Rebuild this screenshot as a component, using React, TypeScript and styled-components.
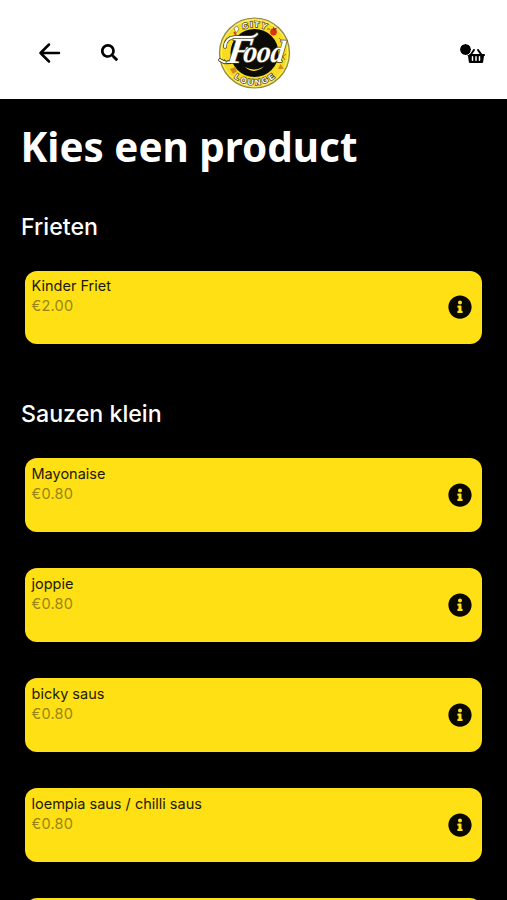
import React from "react";
import styled, { createGlobalStyle } from "styled-components";
import { FaInfoCircle, FaSearch, FaShoppingBasket } from "react-icons/fa";

const GlobalStyle = createGlobalStyle`
  * { box-sizing: border-box; }
  html, body { margin: 0; background: #000; }
  body { height: 900px; overflow: hidden; font-family: Inter, "Liberation Sans", sans-serif; }
`;

const Screen = styled.div`
  height: 900px;
  overflow: hidden;
  background: #000;
`;

const Header = styled.header`
  display: grid;
  grid-template-columns: 1fr 76px 1fr;
  align-items: center;
  height: 98.5px;
  padding: 7px 22px 0;
  background: #fff;
  color: #000;
`;

const HeaderActions = styled.div`
  display: flex;
  align-items: center;
  gap: 40px;
  padding-left: 16px;
`;

const IconButton = styled.button`
  display: flex;
  padding: 0;
  border: 0;
  background: none;
  color: inherit;
`;

const BasketButton = styled(IconButton)`
  position: relative;
  justify-self: end;
  margin-top: 6px;
`;

const BasketBadge = styled.span`
  position: absolute;
  left: -8px;
  top: -4px;
  width: 13px;
  height: 13px;
  border: 1.5px solid #fff;
  border-radius: 50%;
  background: #000;
  background-clip: padding-box;
`;

const Logo = styled.svg`
  display: block;
  width: 76px;
  height: 76px;
  overflow: visible;
`;

const Title = styled.h1`
  margin: 0;
  padding: 20px 0 0 20.5px;
  color: #fff;
  font: 700 40.4px/56px "Noto Sans", "Open Sans", sans-serif;
  white-space: nowrap;
`;

const Section = styled.section`
  padding: 36px 24.7px 18.3px 25px;
`;

const SectionTitle = styled.h2`
  margin: 0 0 28px -4px;
  color: #fff;
  font-size: 23.2px;
  font-weight: 500;
  line-height: 32px;
`;

const ProductList = styled.div`
  display: flex;
  flex-direction: column;
  gap: 36.5px;
`;

const ProductCard = styled.article`
  display: flex;
  justify-content: space-between;
  align-items: center;
  height: 73.5px;
  padding: 0 10px 0 6.5px;
  border-radius: 12px;
  background: #ffe015;
`;

const ProductText = styled.div`
  align-self: flex-start;
  padding-top: 5.4px;
  font-size: 14.5px;
  line-height: 20px;
  white-space: nowrap;
`;

const ProductName = styled.div`
  color: #1c1a05;
`;

const Price = styled.div`
  color: #978613;
  letter-spacing: 0.25px;
`;

const sections = [
  { title: "Frieten", products: [{ name: "Kinder Friet", price: "€2.00" }] },
  {
    title: "Sauzen klein",
    products: [
      { name: "Mayonaise", price: "€0.80" },
      { name: "joppie", price: "€0.80" },
      { name: "bicky saus", price: "€0.80" },
      { name: "loempia saus / chilli saus", price: "€0.80" },
      { name: "", price: "" },
    ],
  },
];

function BrandLogo() {
  return (
    <Logo viewBox="0 0 76 76" role="img" aria-label="City Food Lounge">
      <defs>
        <path id="topArc" d="M12.5 38 A26 26 0 0 1 64.5 38" />
        <path id="bottomArc" d="M6.5 38 A32 32 0 0 0 70.5 38" />
      </defs>
      <circle cx="38.5" cy="38" r="35" fill="#f6dc22" stroke="#8f8748" strokeWidth="1.2" />
      <circle cx="38.5" cy="38" r="33.3" fill="none" stroke="#fff6a8" strokeWidth="0.8" />
      <circle cx="38.5" cy="38" r="24" fill="#0b0b07" />
      <g fontFamily="Liberation Sans" fontWeight="700" fontSize="8" fill="#fff" stroke="#57502a" strokeWidth="1.5" paintOrder="stroke" textAnchor="middle">
        <text letterSpacing="1.6"><textPath href="#topArc" startOffset="51%">CITY</textPath></text>
        <text letterSpacing="2"><textPath href="#bottomArc" startOffset="51%">LOUNGE</textPath></text>
      </g>
      <path d="M18 13 l3 -2 2 3 -3 4z" fill="#fff" stroke="#777033" strokeWidth=".7" />
      <path d="M18 17 l2 3" stroke="#c43a16" strokeWidth="1.5" />
      <circle cx="57.5" cy="17" r="3.4" fill="#dd3217" />
      <path d="M56.5 14.5 l1-3 1 2 3-1-3 3" fill="#8e3418" />
      <path d="M14 54 l5-2 2 4-4 3z M62 54 l2.5-5 3.5 5z" fill="#d08a1a" />
      <path d="M26 14h3M51 14h3M8 44 l5 5 M65 39 l4 6 M64 44 l6-5 M63 23 l5 5 M9 27 l5-6" fill="none" stroke="#81751e" />
      <path d="M29 52 Q38 57 48 51.5 Q38 60 29 52Z" fill="#efdb22" />
      <g fill="none" strokeLinecap="round">
        <path d="M9 32 Q9 23 19 22 H35 Q39 22 41 19 M17 45 Q11 50 4 45" stroke="#49441f" strokeWidth="3.6" />
        <path d="M9 32 Q9 23 19 22 H35 Q39 22 41 19 M17 45 Q11 50 4 45" stroke="#fff" strokeWidth="2.1" />
      </g>
      <g fontFamily="Liberation Serif" fontStyle="italic" fontWeight="700" fill="#fff" stroke="#3b371b" strokeWidth="1.5" strokeLinejoin="round" paintOrder="stroke">
        <text x="17" y="48" fontSize="37" transform="skewX(-8)">
          F<tspan x="33" y="47" fontSize="31" textLength="41" lengthAdjust="spacingAndGlyphs">ood</tspan>
        </text>
      </g>
    </Logo>
  );
}

function Product({ name, price }: { name: string; price: string }) {
  return (
    <ProductCard>
      <ProductText>
        <ProductName>{name}</ProductName>
        <Price>{price}</Price>
      </ProductText>
      <FaInfoCircle size={24} color="#080700" />
    </ProductCard>
  );
}

export default function App() {
  return (
    <Screen>
      <GlobalStyle />
      <Header>
        <HeaderActions>
          <IconButton aria-label="Terug">
            <svg width="23" height="22" viewBox="0 0 23 22" fill="none" stroke="currentColor" strokeWidth="2.5" strokeLinecap="round" strokeLinejoin="round">
              <path d="M21 11H2.5M11 2.5 2.5 11 11 19.5" />
            </svg>
          </IconButton>
          <IconButton aria-label="Zoeken"><FaSearch size={17} /></IconButton>
        </HeaderActions>
        <BrandLogo />
        <BasketButton aria-label="Winkelmand">
          <FaShoppingBasket size={18} />
          <BasketBadge />
        </BasketButton>
      </Header>
      <Title>Kies een product</Title>
      {sections.map((section) => (
        <Section key={section.title}>
          <SectionTitle>{section.title}</SectionTitle>
          <ProductList>
            {section.products.map((product, index) => (
              <Product key={index} {...product} />
            ))}
          </ProductList>
        </Section>
      ))}
    </Screen>
  );
}
